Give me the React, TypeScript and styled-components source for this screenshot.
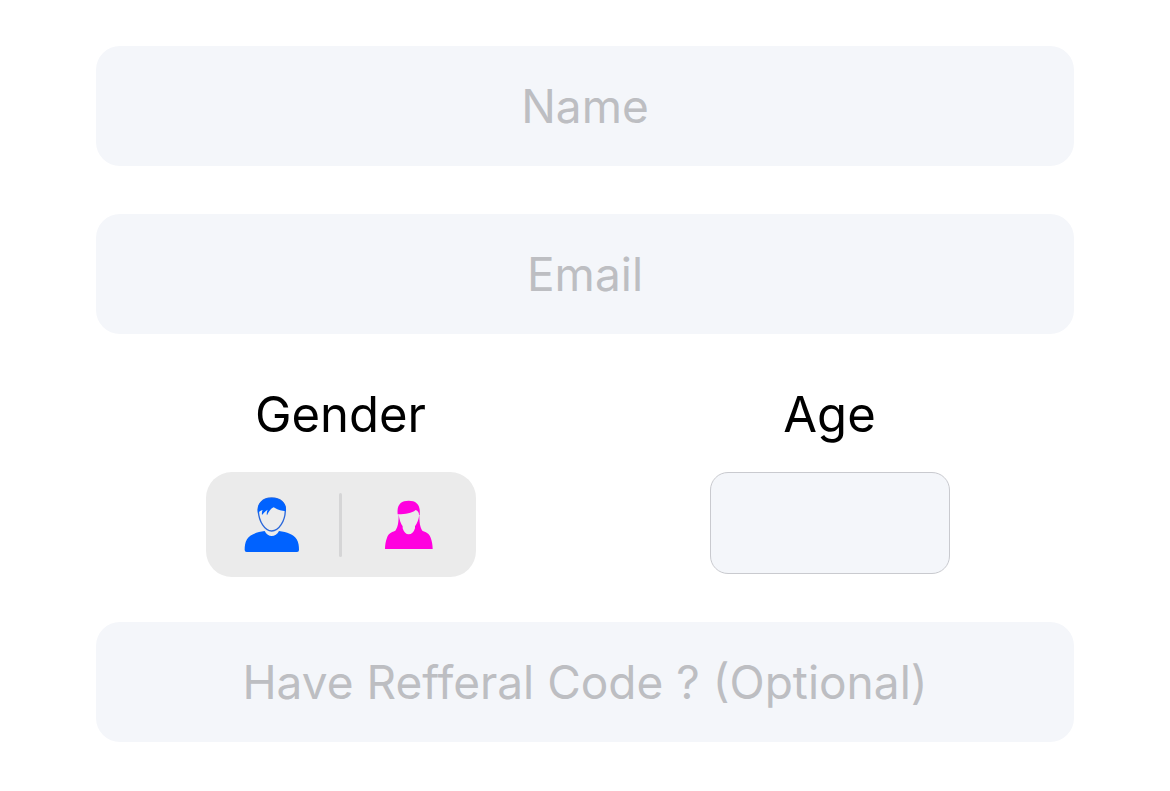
import React, { useState } from "react";
import styled, { createGlobalStyle } from "styled-components";

const GlobalStyle = createGlobalStyle`
  *, *::before, *::after { box-sizing: border-box; }
  body {
    margin: 0;
    background: #ffffff;
    color: #000000;
    font-family: Inter, "Liberation Sans", sans-serif;
  }
`;

const Form = styled.form`
  display: flex;
  flex-direction: column;
  gap: 48px;
  padding: 46px 96px;
`;

const TextField = styled.input`
  width: 100%;
  height: 120px;
  padding: 0 24px;
  border: 0;
  border-radius: 24px;
  background: #f4f6fa;
  color: #000000;
  font-family: inherit;
  font-size: 46px;
  text-align: center;

  &::placeholder {
    color: #bdbec2;
    opacity: 1;
  }
`;

const Details = styled.div`
  display: grid;
  grid-template-columns: 1fr 1fr;
  margin-bottom: -3px;
`;

const DetailGroup = styled.div`
  display: flex;
  flex-direction: column;
  align-items: center;
  gap: 24px;
`;

const Caption = styled.label`
  font-size: 49px;
  line-height: 66px;
`;

const Segments = styled.div`
  display: flex;
  align-items: center;
  width: 270px;
  height: 105px;
  border-radius: 26px;
  background: #ebebeb;
`;

const Segment = styled.label`
  display: flex;
  flex: 1;
  justify-content: center;
  cursor: pointer;
`;

const HiddenRadio = styled.input`
  position: absolute;
  width: 1px;
  height: 1px;
  margin: 0;
  opacity: 0;
`;

const Divider = styled.span`
  width: 3px;
  height: 64px;
  border-radius: 2px;
  background: #d5d5d6;
`;

const PersonIcon = styled.svg`
  display: block;
  width: 75px;
  height: 75px;
`;

const AgeField = styled.input`
  width: 240px;
  height: 102px;
  padding: 0 16px;
  border: 1px solid #c9cacf;
  border-radius: 18px;
  background: #f4f6fa;
  font-family: inherit;
  font-size: 46px;
  text-align: center;
`;

function MaleIcon() {
  return (
    <PersonIcon viewBox="1 6 225 225" aria-hidden="true">
      <path
        d="M71 79C68 57 84 39 111 39C137 39 154 55 152 77C151 108 133 138 111 138C90 138 73 109 71 79Z"
        fill="#ececec"
        stroke="#2b68da"
        strokeWidth="4"
      />
      <path
        d="M70 86C65 58 82 39 111 39C140 39 158 58 153 79C141 77 128 75 117 67C108 71 102 80 97 91C95 84 97 79 99 74C93 77 87 83 82 90C81 83 82 79 84 75C77 77 73 80 70 86Z"
        fill="#0062ff"
      />
      <path
        d="M90 138C95 149 103 153 111 153C120 153 128 149 133 138C157 141 177 148 186 163C192 173 193 184 193 195Q193 201 187 201H36Q30 201 30 195C30 184 31 173 37 163C46 148 66 141 90 138Z"
        fill="#0062ff"
      />
    </PersonIcon>
  );
}

function FemaleIcon() {
  return (
    <PersonIcon viewBox="3 6 225 225" aria-hidden="true">
      <path
        d="M83 88C80 61 91 47 116 47C142 47 152 62 149 90L147 90C147 83 144 78 137 75C125 85 107 87 85 88Z"
        fill="#ff00df"
      />
      <path
        d="M86 88C88 104 92 116 98 124V130C102 142 108 148 116 148C125 148 131 142 135 130V124C142 115 146 104 148 88C148 112 150 127 157 137C171 142 178 147 182 158C186 169 188 180 188 192H45C45 180 47 169 51 158C55 147 62 142 76 137C84 127 86 112 86 88Z"
        fill="#ff00df"
      />
    </PersonIcon>
  );
}

export default function App() {
  const [gender, setGender] = useState("");

  return (
    <>
      <GlobalStyle />
      <Form onSubmit={(event) => event.preventDefault()}>
        <TextField type="text" name="name" placeholder="Name" aria-label="Name" />
        <TextField type="email" name="email" placeholder="Email" aria-label="Email" />
        <Details>
          <DetailGroup>
            <Caption as="span" id="gender-caption">
              Gender
            </Caption>
            <Segments role="radiogroup" aria-labelledby="gender-caption">
              <Segment>
                <HiddenRadio
                  type="radio"
                  name="gender"
                  aria-label="Male"
                  checked={gender === "male"}
                  onChange={() => setGender("male")}
                />
                <MaleIcon />
              </Segment>
              <Divider />
              <Segment>
                <HiddenRadio
                  type="radio"
                  name="gender"
                  aria-label="Female"
                  checked={gender === "female"}
                  onChange={() => setGender("female")}
                />
                <FemaleIcon />
              </Segment>
            </Segments>
          </DetailGroup>
          <DetailGroup>
            <Caption htmlFor="age">Age</Caption>
            <AgeField id="age" name="age" type="text" inputMode="numeric" />
          </DetailGroup>
        </Details>
        <TextField
          type="text"
          name="code"
          placeholder="Have Refferal Code ? (Optional)"
          aria-label="Have Refferal Code ? (Optional)"
        />
      </Form>
    </>
  );
}
